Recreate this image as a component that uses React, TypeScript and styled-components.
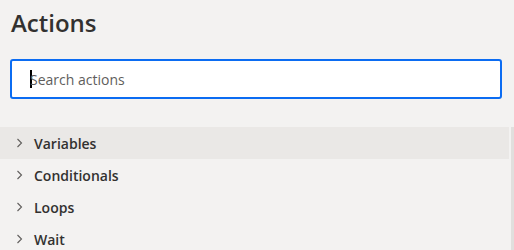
import styled, { createGlobalStyle } from "styled-components";

const GlobalStyle = createGlobalStyle`
	html, body {
		margin: 0;
		padding: 0;
		background: #f3f2f1;
		font-family: "Open Sans", "Noto Sans", sans-serif;
		color: #323130;
	}
`;

const Panel = styled.div`
	width: 514px;
	height: 250px;
	overflow: hidden;
	display: flex;
	flex-direction: column;
	background: #f3f2f1;
`;

const Header = styled.div`
	display: flex;
	flex-direction: column;
	padding: 7px 12px 0 10px;
	gap: 20px;
`;

const Title = styled.h1`
	margin: 0 0 0 1px;
	font-size: 24px;
	line-height: 32px;
	font-weight: 600;
	color: #323130;
`;

const SearchBox = styled.div`
	display: flex;
	align-items: center;
	height: 36px;
	padding: 0 18px;
	background: #ffffff;
	border: 2px solid #0b6cf2;
	border-radius: 3px;
`;

const Caret = styled.span`
	width: 2px;
	height: 18px;
	background: #000;
	margin-right: -2px;
`;

const SearchInput = styled.input`
	flex: 1;
	border: none;
	outline: none;
	background: transparent;
	padding: 0;
	font-family: "Open Sans", "Noto Sans", sans-serif;
	font-size: 14px;
	color: #323130;
	&::placeholder {
		color: #605e5c;
	}
`;

const Body = styled.div`
	display: flex;
	flex: 1;
	margin-top: 28px;
	gap: 2px;
`;

const List = styled.ul`
	flex: 1;
	list-style: none;
	margin: 0;
	padding: 0;
`;

const Row = styled.li<{ $hovered?: boolean }>`
	display: flex;
	align-items: center;
	height: 32px;
	padding-left: 15px;
	gap: 11px;
	background: ${props => (props.$hovered ? "#eae8e6" : "transparent")};
	font-size: 14px;
	font-weight: 600;
	color: #323130;
`;

const Chevron = styled.svg`
	width: 8px;
	height: 12px;
	flex-shrink: 0;
`;

const ScrollTrack = styled.div`
	width: 3px;
	background: #e1dfdd;
`;

const groups = ["Variables", "Conditionals", "Loops", "Wait"];

export default function App() {
	return (
		<Panel>
			<GlobalStyle />
			<Header>
				<Title>Actions</Title>
				<SearchBox>
					<Caret />
					<SearchInput placeholder="Search actions" readOnly />
				</SearchBox>
			</Header>
			<Body>
				<List>
					{groups.map((name, index) => (
						<Row key={name} $hovered={index === 0}>
							<Chevron viewBox="0 0 8 12">
								<path d="M2.5 2 L6.5 6 L2.5 10" fill="none" stroke="#605e5c" strokeWidth="1.1" />
							</Chevron>
							{name}
						</Row>
					))}
				</List>
				<ScrollTrack />
			</Body>
		</Panel>
	);
}
